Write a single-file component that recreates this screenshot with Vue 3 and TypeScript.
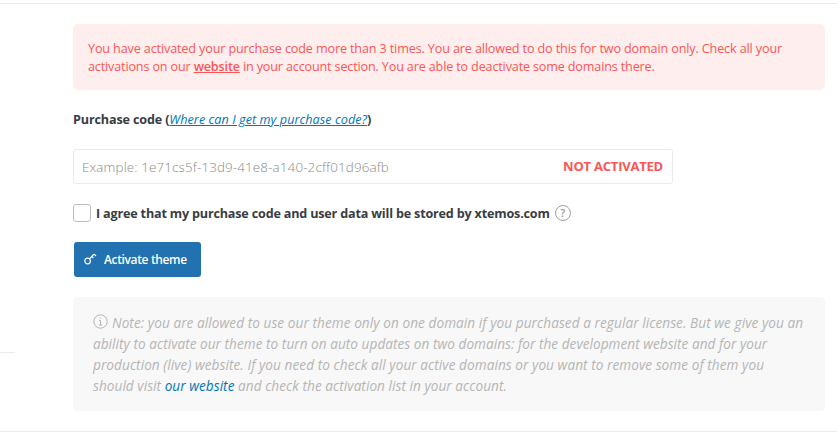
<script setup lang="ts">
import { ref } from 'vue'

const code = ref('')
const agreed = ref(false)
</script>

<template>
  <main class="panel">
    <div class="rail"><div class="rail-line"></div></div>
    <section class="content">
      <div class="alert">
        <div class="line"><span class="a1">You have activated your purchase code more than 3 times. You are allowed to do this for two domain only. Check all your</span></div>
        <div class="line"><span class="a2">activations on our <a href="#" class="alert-link">website</a> in your account section. You are able to deactivate some domains there.</span></div>
      </div>

      <label class="title" for="code"><span class="t1">Purchase code (</span><a href="#" class="help-link">Where can I get my purchase code?</a><span>)</span></label>

      <div class="field">
        <input id="code" v-model="code" class="input" type="text" placeholder="Example: 1e71cs5f-13d9-41e8-a140-2cff01d96afb" />
        <span class="status">NOT ACTIVATED</span>
      </div>

      <label class="agree">
        <input v-model="agreed" class="check" type="checkbox" />
        <span class="agree-text">I agree that my purchase code and user data will be stored by xtemos.com</span>
        <span class="hint">?</span>
      </label>

      <button class="button" type="button">
        <svg class="key" viewBox="0 0 14 14" width="14" height="14" fill="none" stroke="currentColor" stroke-width="1.2">
          <circle cx="4.6" cy="9" r="2.8" />
          <path d="M6.5 6.9 10.2 2.8 11.4 2.4 13 4M8.7 4.4l1.7 1.6" />
        </svg>
        <span class="button-text">Activate theme</span>
      </button>

      <div class="note">
        <div class="note-line">
          <svg class="info" viewBox="0 0 15 15" width="15" height="15" fill="none" stroke="currentColor">
            <circle cx="7.5" cy="7.5" r="6.7" />
            <path d="M6 6.5h1.5v4.5M5.8 11h3.4M6.9 4.1h1.2" />
          </svg>
          <span class="n1">Note: you are allowed to use our theme only on one domain if you purchased a regular license. But we give you an</span>
        </div>
        <div class="note-line"><span class="n2">ability to activate our theme to turn on auto updates on two domains: for the development website and for your</span></div>
        <div class="note-line"><span class="n3">production (live) website. If you need to check all your active domains or you want to remove some of them you</span></div>
        <div class="note-line"><span class="n4">should visit <a href="#" class="note-link">our website</a> and check the activation list in your account.</span></div>
      </div>
    </section>
  </main>
</template>

<style>
body {
  margin: 0;
  background: #fff;
}
</style>

<style scoped>
.panel {
  box-sizing: border-box;
  display: flex;
  height: 432px;
  padding-top: 3px;
  overflow: hidden;
  background: linear-gradient(#ebebeb, #ebebeb) 0 3px / 100% 1px no-repeat, linear-gradient(#ebebeb, #ebebeb) 0 431px / 100% 1px no-repeat;
  font-family: "Open Sans", "Noto Sans", sans-serif;
  font-size: 12.6px;
  white-space: nowrap;
}
.rail {
  width: 73px;
  flex: none;
  padding-top: 349px;
  box-sizing: border-box;
}
.rail-line {
  width: 15px;
  height: 1px;
  background: #ebebeb;
}
.content {
  display: flex;
  flex-direction: column;
  align-items: flex-start;
  width: 752px;
  padding-top: 21px;
}
.alert {
  box-sizing: border-box;
  width: 752px;
  height: 66px;
  padding: 16px 15px 14px;
  border-radius: 5px;
  background: #ffeeee;
  color: #fb5555;
}
.line {
  height: 18px;
  line-height: 18px;
}
.a1 {
  letter-spacing: -0.13px;
}
.a2 {
  letter-spacing: -0.152px;
}
.alert-link {
  color: inherit;
  font-weight: 600;
}
.title {
  margin-top: 20px;
  height: 20px;
  line-height: 20px;
  color: #383d43;
  font-weight: 700;
}
.t1 {
  letter-spacing: -0.14px;
}
.help-link {
  color: #0076b8;
  font-style: italic;
  font-weight: 400;
  letter-spacing: 0.07px;
}
.field {
  box-sizing: border-box;
  display: flex;
  align-items: center;
  width: 600px;
  height: 35px;
  margin-top: 19px;
  padding: 0 9px 0 8px;
  border: 1px solid #ebebeb;
  border-radius: 3px;
}
.input {
  flex: 1;
  min-width: 0;
  padding: 0;
  border: 0;
  outline: 0;
  background: none;
  font: 300 13.4px "Open Sans", sans-serif;
  letter-spacing: 0.14px;
}
.input::placeholder {
  color: #8a8a8a;
  opacity: 1;
}
.status {
  padding-bottom: 2px;
  color: #fb5555;
  font-size: 13px;
  font-weight: 700;
  letter-spacing: -0.22px;
  line-height: 18px;
}
.agree {
  display: flex;
  align-items: center;
  height: 20px;
  margin-top: 19px;
  color: #383d43;
  font-weight: 700;
}
.agree-text {
  letter-spacing: -0.18px;
}
.check {
  appearance: none;
  box-sizing: border-box;
  width: 18px;
  height: 18px;
  margin: 0 5px 0 0;
  border: 1px solid #bbbdbf;
  border-radius: 3px;
  background: #fff;
}
.hint {
  display: flex;
  align-items: center;
  justify-content: center;
  box-sizing: border-box;
  width: 16px;
  height: 16px;
  margin-left: 5px;
  border: 1px solid #a3a3a3;
  border-radius: 50%;
  color: #969696;
  font-size: 10px;
  font-weight: 600;
  line-height: 14px;
}
.button {
  display: flex;
  align-items: center;
  width: 127px;
  height: 35px;
  margin: 19px 0 0 1px;
  padding: 0 0 0 9px;
  border: 0;
  border-radius: 3px;
  background: #2271b1;
  color: #fff;
  font: 600 12px "Open Sans", sans-serif;
  letter-spacing: -0.36px;
}
.key {
  margin: 0 7px 1px 0;
}
.note {
  box-sizing: border-box;
  width: 752px;
  height: 114px;
  margin-top: 20px;
  padding: 15px 20px;
  border-radius: 5px;
  background: #f8f8f8;
  color: #b5b5b5;
  font-size: 13.6px;
  font-style: italic;
}
.note-line {
  display: flex;
  height: 21px;
  line-height: 21px;
}
.n1 {
  letter-spacing: 0.07px;
}
.n2 {
  letter-spacing: 0.04px;
}
.n3 {
  letter-spacing: 0.065px;
}
.n4 {
  letter-spacing: 0.05px;
}
.info {
  margin: 2px 4px 0 0;
}
.note-link {
  color: #0076b8;
  text-decoration: none;
}
</style>
